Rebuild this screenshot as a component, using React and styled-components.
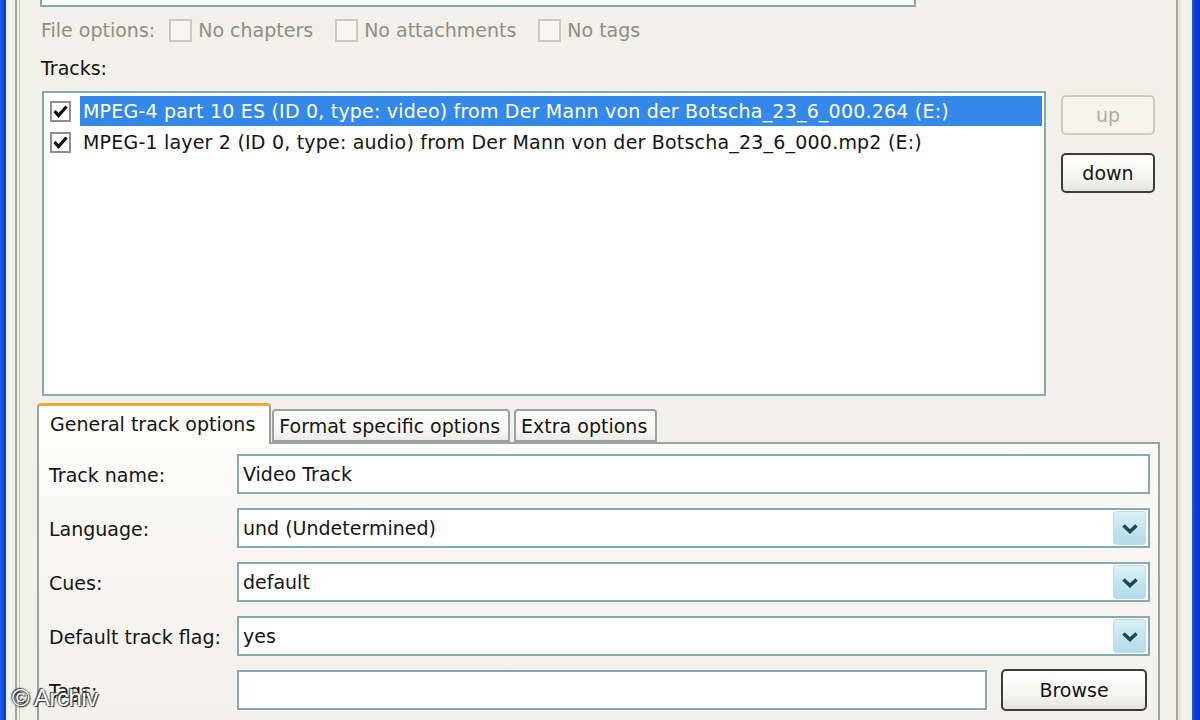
import React from 'react';
import styled, { createGlobalStyle } from 'styled-components';

const GlobalStyle = createGlobalStyle`
	html, body {
		margin: 0;
		padding: 0;
		background: #f1f0e9;
	}
	body {
		font-family: "DejaVu Sans", "Noto Sans", sans-serif;
		font-size: 19px;
		color: #141414;
	}
`;

const Screen = styled.div`
	position: relative;
	display: flex;
	width: 1200px;
	height: 720px;
	overflow: hidden;
	background: #f1f0e9;
`;

const BlueEdge = styled.div`
	flex: none;
	width: ${(p) => (p.side === 'left' ? 6 : 8)}px;
	background: ${(p) =>
		p.side === 'left'
			? 'linear-gradient(90deg, #1f5fe8 0%, #0c44d8 60%, #0a3cc8 100%)'
			: 'linear-gradient(90deg, #2a5ee0 0%, #0b3fd8 30%, #0834c4 100%)'};
`;

const Client = styled.div`
	flex: 1;
	display: flex;
	padding: 0 14px 0 9px;
	background: #f1f0e9;
`;

const Sheet = styled.div`
	flex: 1;
	display: flex;
	padding-left: 2px;
	border-left: 2px solid #a4a89b;
	border-right: 2px solid #a4a89b;
	box-shadow: 3px 0 0 #e9e8d8;
`;

const Content = styled.div`
	flex: 1;
	display: flex;
	flex-direction: column;
	padding: 0 16px 0 17px;
	border-left: 1px solid #c3c6b9;
`;

const TopField = styled.div`
	flex: none;
	width: 872px;
	height: 30px;
	margin: -27px 0 0 3px;
	background: #fdfefe;
	border: 2px solid #86abae;
`;

const OptionsRow = styled.div`
	display: flex;
	align-items: center;
	height: 26px;
	margin-top: 10px;
	padding-left: 4px;
	color: #8f8e86;
`;

const OptionsLabel = styled.span`
	margin-right: 14px;
`;

const Option = styled.label`
	display: flex;
	align-items: center;
	gap: 6px;
	margin-right: 22px;
`;

const Box = styled.span`
	flex: none;
	display: flex;
	align-items: center;
	justify-content: center;
	width: ${(p) => (p.small ? 21 : 23)}px;
	height: ${(p) => (p.small ? 21 : 23)}px;
	box-sizing: border-box;
	border: 2px solid ${(p) => (p.disabled ? '#cbcac0' : '#8e8f8a')};
	background: ${(p) => (p.disabled ? '#f6f5ef' : '#ffffff')};
`;

const SectionLabel = styled.div`
	height: 24px;
	line-height: 24px;
	margin-top: 13px;
	padding-left: 4px;
`;

const ListRow = styled.div`
	display: flex;
	align-items: flex-start;
	margin-top: 11px;
	padding-left: 5px;
`;

const TrackList = styled.div`
	width: 1004px;
	height: 305px;
	box-sizing: border-box;
	padding: 3px 2px 0 6px;
	background: #ffffff;
	border: 2px solid #86abae;
`;

const TrackRow = styled.div`
	display: flex;
	align-items: center;
	height: 30px;
	margin-bottom: 1px;
`;

const TrackCheck = styled.div`
	flex: none;
	width: 30px;
	display: flex;
	align-items: center;
`;

const TrackText = styled.div`
	flex: 1;
	height: 30px;
	line-height: 30px;
	padding-left: 3px;
	white-space: nowrap;
	letter-spacing: 0.2px;
	color: ${(p) => (p.selected ? '#ffffff' : '#141414')};
	background: ${(p) => (p.selected ? '#3488e8' : 'transparent')};
`;

const SideButtons = styled.div`
	display: flex;
	flex-direction: column;
	gap: 18px;
	margin: 4px 0 0 15px;
`;

const Button = styled.button`
	width: ${(p) => p.width || 94}px;
	height: ${(p) => p.height || 40}px;
	padding: 0;
	font: inherit;
	border-radius: 5px;
	border: 2px solid ${(p) => (p.disabled ? '#cdcbbd' : '#3a3c3c')};
	color: ${(p) => (p.disabled ? '#aeac9f' : '#141414')};
	background: ${(p) =>
		p.disabled
			? '#f5f4ea'
			: 'linear-gradient(180deg, #ffffff 0%, #f6f6f1 60%, #e4e3dc 100%)'};
`;

const TabStrip = styled.div`
	display: flex;
	align-items: flex-end;
	margin-top: 7px;
	position: relative;
	z-index: 1;
`;

const Tab = styled.div`
	box-sizing: border-box;
	height: ${(p) => (p.active ? 41 : 33)}px;
	line-height: ${(p) => (p.active ? 36 : 31)}px;
	padding: ${(p) => (p.active ? '0 14px 0 11px' : '0 8px 0 5px')};
	margin-right: ${(p) => p.gap || 0}px;
	margin-bottom: ${(p) => (p.active ? -2 : 0)}px;
	border: 2px solid #9aa39f;
	border-bottom: ${(p) => (p.active ? 'none' : '2px solid #9aa39f')};
	border-top: ${(p) => (p.active ? '3px solid #f0a63c' : '2px solid #9aa39f')};
	border-radius: 4px 4px 0 0;
	white-space: nowrap;
	background: ${(p) =>
		p.active
			? '#fcfcfb'
			: 'linear-gradient(180deg, #fefefe 0%, #f6f6f2 70%, #ecebe4 100%)'};
`;

const TabPanel = styled.div`
	flex: 1;
	display: flex;
	flex-direction: column;
	gap: 14px;
	padding: 10px 8px 0 10px;
	border: 2px solid #9aa39f;
	border-bottom: none;
	background: linear-gradient(180deg, #fcfcfb 0%, #f6f5f1 40%, #f2f1eb 100%);
`;

const FormRow = styled.div`
	display: flex;
	align-items: center;
	height: 40px;
`;

const FieldLabel = styled.div`
	flex: none;
	width: 188px;
	padding-top: 2px;
`;

const Field = styled.div`
	flex: 1;
	display: flex;
	align-items: center;
	height: 40px;
	box-sizing: border-box;
	padding: 0 2px 0 4px;
	background: #ffffff;
	border: 2px solid #86abae;
`;

const FieldText = styled.span`
	flex: 1;
	white-space: nowrap;
`;

const DropButton = styled.div`
	flex: none;
	display: flex;
	align-items: center;
	justify-content: center;
	width: 31px;
	height: 32px;
	border-radius: 3px;
	border: 1px solid #bfdce6;
	background: linear-gradient(180deg, #dcf0f6 0%, #c3e4ee 55%, #b3dce9 100%);
`;

const BrowseGap = styled.div`
	flex: none;
	width: ${(p) => p.size || 14}px;
`;

const Watermark = styled.div`
	position: absolute;
	left: 12px;
	top: 684px;
	font-family: "Liberation Sans", Arial, sans-serif;
	font-size: 24px;
	color: #ffffff;
	text-shadow: 0 0 2px #2a2a2a, 1px 1px 1px #2a2a2a, -1px -1px 1px #4a4a4a;
	letter-spacing: -0.5px;
`;

const Check = () => (
	<svg width="15" height="13" viewBox="0 0 15 13">
		<polyline
			points="1.5,6 5.5,10.5 13.5,1.5"
			fill="none"
			stroke="#0b0b0b"
			strokeWidth="3.2"
		/>
	</svg>
);

const Chevron = () => (
	<svg width="18" height="11" viewBox="0 0 18 11">
		<polyline
			points="2.5,2.5 9,8.5 15.5,2.5"
			fill="none"
			stroke="#1f4859"
			strokeWidth="3.6"
		/>
	</svg>
);

const tracks = [
	{
		id: 'video',
		label: 'MPEG-4 part 10 ES (ID 0, type: video) from Der Mann von der Botscha_23_6_000.264 (E:)',
		selected: true,
	},
	{
		id: 'audio',
		label: 'MPEG-1 layer 2 (ID 0, type: audio) from Der Mann von der Botscha_23_6_000.mp2 (E:)',
		selected: false,
	},
];

const selects = [
	{ label: 'Language:', value: 'und (Undetermined)' },
	{ label: 'Cues:', value: 'default' },
	{ label: 'Default track flag:', value: 'yes' },
];

export default function App() {
	return (
		<>
			<GlobalStyle />
			<Screen>
				<BlueEdge side="left" />
				<Client>
					<Sheet>
						<Content>
							<TopField />
							<OptionsRow>
								<OptionsLabel>File options:</OptionsLabel>
								{['No chapters', 'No attachments', 'No tags'].map((name) => (
									<Option key={name}>
										<Box disabled />
										{name}
									</Option>
								))}
							</OptionsRow>
							<SectionLabel>Tracks:</SectionLabel>
							<ListRow>
								<TrackList>
									{tracks.map((track) => (
										<TrackRow key={track.id}>
											<TrackCheck>
												<Box small>
													<Check />
												</Box>
											</TrackCheck>
											<TrackText selected={track.selected}>{track.label}</TrackText>
										</TrackRow>
									))}
								</TrackList>
								<SideButtons>
									<Button disabled>up</Button>
									<Button>down</Button>
								</SideButtons>
							</ListRow>
							<TabStrip>
								<Tab active gap={1}>General track options</Tab>
								<Tab gap={4}>Format specific options</Tab>
								<Tab>Extra options</Tab>
							</TabStrip>
							<TabPanel>
								<FormRow>
									<FieldLabel>Track name:</FieldLabel>
									<Field>
										<FieldText>Video Track</FieldText>
									</Field>
								</FormRow>
								{selects.map((row) => (
									<FormRow key={row.label}>
										<FieldLabel>{row.label}</FieldLabel>
										<Field>
											<FieldText>{row.value}</FieldText>
											<DropButton>
												<Chevron />
											</DropButton>
										</Field>
									</FormRow>
								))}
								<FormRow>
									<FieldLabel>Tags:</FieldLabel>
									<Field />
									<BrowseGap />
									<Button width={146} height={42}>Browse</Button>
									<BrowseGap size={3} />
								</FormRow>
							</TabPanel>
						</Content>
					</Sheet>
				</Client>
				<BlueEdge side="right" />
				<Watermark>© Archiv</Watermark>
			</Screen>
		</>
	);
}
